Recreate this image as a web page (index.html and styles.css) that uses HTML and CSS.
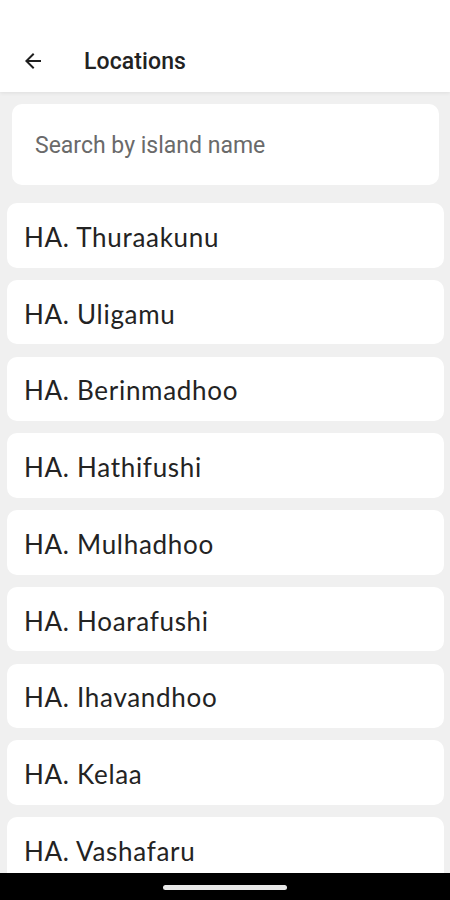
FILE: index.html
```html
<!DOCTYPE html>
<html>
<head>
<meta charset="utf-8">
<link rel="stylesheet" href="styles.css">
</head>
<body>
<div class="app">
  <header class="topbar">
    <svg class="back" width="24" height="24" viewBox="0 0 24 24"><path d="M20 11H7.83l5.59-5.59L12 4l-8 8 8 8 1.41-1.41L7.83 13H20v-2z" fill="#1f1f1f"/></svg>
    <h1 class="title">Locations</h1>
  </header>
  <main class="content">
    <div class="search">Search by island name</div>
    <ul class="list">
      <li class="item">HA. Thuraakunu</li>
      <li class="item">HA. Uligamu</li>
      <li class="item">HA. Berinmadhoo</li>
      <li class="item">HA. Hathifushi</li>
      <li class="item">HA. Mulhadhoo</li>
      <li class="item">HA. Hoarafushi</li>
      <li class="item">HA. Ihavandhoo</li>
      <li class="item">HA. Kelaa</li>
      <li class="item">HA. Vashafaru</li>
    </ul>
  </main>
  <footer class="navbar"><span class="pill"></span></footer>
</div>
</body>
</html>
```
FILE: styles.css
```css
html, body { margin: 0; padding: 0; }
body { background: #f0f0f0; font-family: Roboto, "Noto Sans", sans-serif; }
.app { height: 900px; display: flex; flex-direction: column; overflow: hidden; }
.topbar {
  height: 92px; flex: none; background: #fff; display: flex; align-items: center;
  padding: 30px 0 0 21px; box-sizing: border-box; box-shadow: 0 1px 4px rgba(0,0,0,0.08);
  position: relative; z-index: 1;
}
.back { display: block; }
.title { margin: 0 0 0 39px; font-size: 23px; font-weight: 500; color: #222; letter-spacing: 0.1px; }
.content { flex: 1; overflow: hidden; background: #f0f0f0; }
.search {
  margin: 12px 11px 0 12px; height: 81px; background: #fff; border-radius: 10px;
  display: flex; align-items: center; padding: 2px 0 0 23px; box-sizing: border-box;
  font-size: 23px; color: #6a6a6a;
}
.list { list-style: none; margin: 18px 6px 0 7px; padding: 0; display: flex; flex-direction: column; gap: 12.25px; }
.item {
  height: 64.5px; background: #fff; border-radius: 10px; display: flex; align-items: center;
  padding: 3px 0 0 17px; box-sizing: border-box;
  font-family: Lato, "Noto Sans", sans-serif; font-size: 26px; letter-spacing: 0.7px; color: #232323;
}
.navbar { height: 27px; flex: none; background: #000; display: flex; justify-content: center; align-items: center; }
.pill { width: 124px; height: 5px; border-radius: 3px; background: #e8e8e8; margin-top: 2px; }
```
